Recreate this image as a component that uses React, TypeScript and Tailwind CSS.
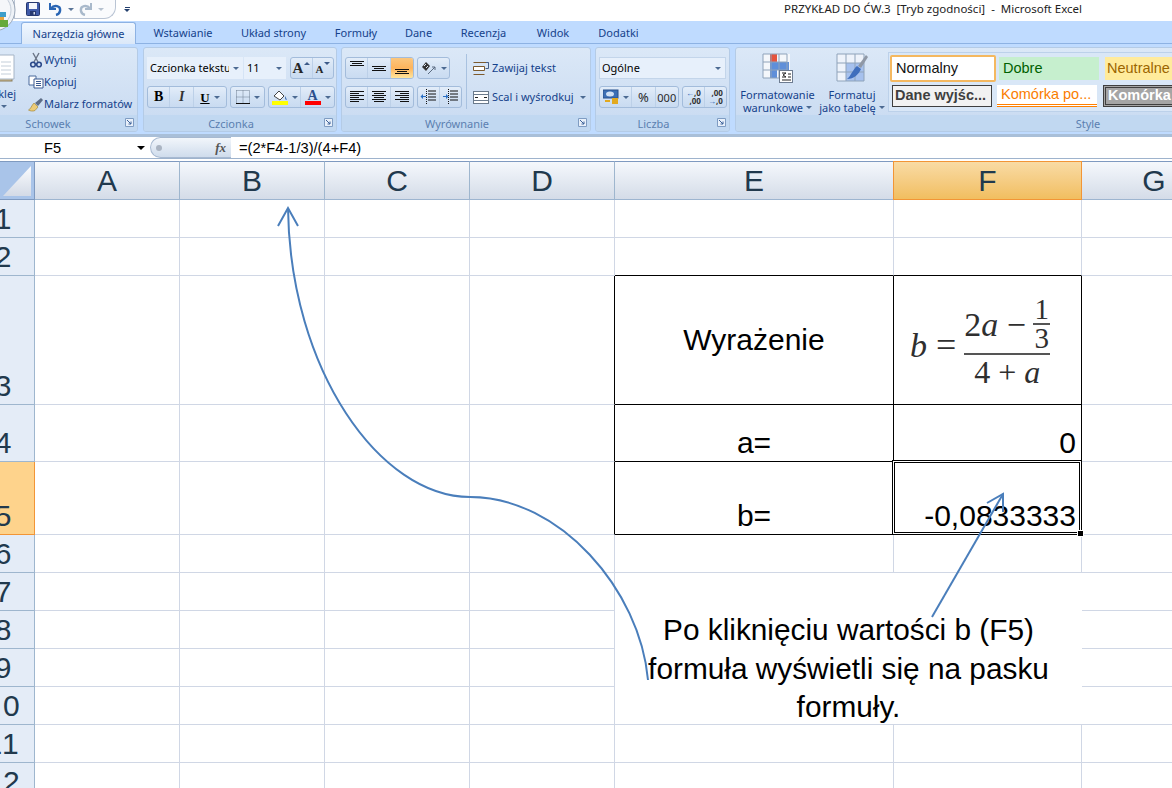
import React from "react";

const Caret = ({ c = "border-t-[#4c6a92]" }: { c?: string }) => (
  <span className={`inline-block w-0 h-0 border-x-[3px] border-t-[3px] border-x-transparent ${c}`} />
);

const Launcher = () => (
  <svg width="9" height="9" viewBox="0 0 9 9" className="shrink-0">
    <path d="M.5 .5h8v8h-8z" fill="#e8f0fa" stroke="#7f9cc2" />
    <path d="M2 2l4 4M6 3.500V6H3.500" fill="none" stroke="#3d6299" />
  </svg>
);

const Group = ({ w, label, ml, pad = "pr-[18px]", children }: { w: string; label: string; ml: string; pad?: string; children?: React.ReactNode }) => (
  <div className={`${w} ${ml} shrink-0 flex flex-col h-[85px] rounded-[3px] border border-[#b4cbe6] bg-gradient-to-b from-[#dbe8f7] to-[#c8daf1] overflow-hidden relative`}>
    <div className="flex-1 min-h-0 relative">{children}</div>
    <div className={`h-[16px] shrink-0 bg-[#c1d8f1] flex items-center justify-center text-[11px] leading-none text-[#5b7fb0] relative ${pad}`}>
      <span>{label}</span>
      {label !== "Style" && (
        <span className="absolute right-[3px] top-[3px]">
          <Launcher />
        </span>
      )}
    </div>
  </div>
);

const Btns = ({ w, children }: { w: string; children: React.ReactNode }) => (
  <div className={`${w} h-[22px] shrink-0 flex rounded-[3px] border border-[#a3bcdb] bg-gradient-to-b from-[#e3edf9] via-[#d3e2f4] to-[#c9dbf1] overflow-hidden divide-x divide-[#bcd0e8]`}>
    {children}
  </div>
);

const Seg = ({ w, on, children }: { w: string; on?: boolean; children: React.ReactNode }) => (
  <div className={`${w} h-full flex items-center justify-center gap-[4px] ${on ? "bg-gradient-to-b from-[#fbc77e] via-[#fdb45c] to-[#ffe59b]" : ""}`}>{children}</div>
);

const Lines = ({ rows }: { rows: [number, number, number][] }) => (
  <svg width="16" height="16" viewBox="0 0 16 16">
    {rows.map(([x, y, w], i) => (
      <rect key={i} x={x} y={y} width={w} height="1" fill="#111" />
    ))}
  </svg>
);

const Indent = ({ flip }: { flip?: boolean }) => (
  <svg width="18" height="18" viewBox="0 0 18 18">
    <path d="M8 3h8M8 6h8M8 9h8M8 12h8" stroke="#111" />
    <path d="M6.500 1v16" stroke="#111" strokeDasharray="1 1" />
    {flip ? <path d="M1 8h3V6l2.500 2.500L4 11V9H1z" fill="#2a6fc4" /> : <path d="M6 8H3V6L.5 8.500 3 11V9h3z" fill="#2a6fc4" />}
  </svg>
);

const SheetGrid = ({ x, y, size }: { x: number; y: number; size: number }) => (
  <g>
    {[0, 1, 2, 3].map((i) => (
      <path key={`h${i}`} d={`M${x} ${y + i * size}h${size * 3}`} stroke="#8fa3ba" fill="none" />
    ))}
    {[0, 1, 2, 3].map((i) => (
      <path key={`v${i}`} d={`M${x + i * size} ${y}v${size * 3}`} stroke="#8fa3ba" fill="none" />
    ))}
  </g>
);

const colWidths = ["A", "B", "C", "D", "E", "F", "G"];
const rowLabels = ["1", "2", "3", "4", "5", "6", "7", "8", "9", "10", "11", "12"];

const tableText: Record<string, { t: string; right?: boolean; mid?: boolean }> = {
  "E3": { t: "Wyrażenie", mid: true },
  "E4": { t: "a=" },
  "E5": { t: "b=" },
  "F4": { t: "0", right: true },
  "F5": { t: "-0,0833333", right: true },
};

const Formula = () => (
  <div className="w-full h-full flex items-center pl-[16px] text-[#2f2f2f] text-[34px] leading-none" style={{ fontFamily: '"Liberation Serif", serif' }}>
    <span className="italic mt-[12px]">b</span>
    <span className="ml-[9px] mt-[9px] text-[36px]">=</span>
    <div className="ml-[8px] flex flex-col items-center w-[86px] shrink-0">
      <div className="w-full flex items-end border-b-2 border-[#555] h-[62px]">
        <span className="mb-[11px] whitespace-pre">2<i>a</i> −</span>
        <div className="ml-auto flex flex-col items-center w-[17px] text-[29px] leading-[27px] mb-[1px]">
          <span className="border-b-2 border-[#555] w-full text-center">1</span>
          <span>3</span>
        </div>
      </div>
      <div className="mt-[1px] whitespace-pre text-[32px]">4 + <i>a</i></div>
    </div>
  </div>
);

const Sheet = () => (
  <div
    className="grid grid-cols-[35px_145px_145px_145px_145px_279px_188px_145px] grid-rows-[39px_38px_38px_129px_57px_73px_38px_38px_38px_38px_38px_38px_38px] text-[30px] text-black"
    style={{ fontFamily: '"Liberation Sans", sans-serif' }}
  >
    <div className="bg-[#a9c4e9] border-t border-[#7f9ac0] border-r border-b flex items-end justify-end p-[3px]">
      <div className="w-[29px] h-[30px] bg-gradient-to-b from-[#fbfcfe] to-[#d3dae6] [clip-path:polygon(100%_0,100%_100%,0_100%)]" />
    </div>
    {colWidths.map((c) => (
      <div
        key={c}
        className={`flex items-center justify-center border-t border-b border-r text-[#21394d] ${
          c === "F"
            ? "bg-gradient-to-b from-[#f9dba4] to-[#f1be5f] border-[#f29536] border-l-[1px] -ml-px"
            : "bg-gradient-to-b from-[#f5f8fc] to-[#d4dce8] border-b-[#9db5d0] border-r-[#9eb6ce] border-t-[#7f9ac0]"
        }`}
      >
        {c}
      </div>
    ))}
    {rowLabels.map((r) => (
      <React.Fragment key={r}>
        <div
          className={`overflow-hidden flex items-end border-r border-b leading-[36px] text-[#21394d] ${
            r === "5" ? "bg-[#fed38c] border-[#f29536]" : "bg-[#e4ecf7] border-r-[#9eb6ce] border-b-[#9eb6ce]"
          }`}
        >
          <span className={`w-[62px] -ml-[28px] shrink-0 text-center ${r.length > 1 ? "tracking-[2px]" : ""}`}>{r}</span>
        </div>
        {colWidths.map((c) => {
          const id = `${c}${r}`;
          const n = Number(r);
          const inTable = (c === "E" || c === "F") && n >= 3 && n <= 5;
          const blackRight = inTable || (c === "D" && n >= 3 && n <= 5);
          const blackBottom = inTable || ((c === "E" || c === "F") && n === 2);
          const cell = tableText[id];
          return (
            <div
              key={id}
              className={`relative flex border-r border-b leading-[36px] ${blackRight ? "border-r-black" : "border-r-[#d0d7e5]"} ${
                blackBottom ? "border-b-black" : "border-b-[#d0d7e5]"
              } ${cell?.right ? "justify-end pr-[5px]" : "justify-center"} ${cell?.mid ? "items-center" : "items-end"}`}
            >
              {cell && <span>{cell.t}</span>}
              {id === "F3" && <Formula />}
              {id === "F5" && (
                <div className="absolute z-10 -left-[2px] -top-[2px] -right-px -bottom-px border border-black">
                  <div className="w-full h-full border border-white">
                    <div className="w-full h-full border border-black" />
                  </div>
                  <div className="absolute -right-[3px] -bottom-[3px] w-[5px] h-[5px] bg-black border border-white box-content" />
                </div>
              )}
            </div>
          );
        })}
      </React.Fragment>
    ))}
  </div>
);

export default function App() {
  return (
    <div className="relative w-[1172px] h-[788px] overflow-hidden bg-white" style={{ fontFamily: '"Noto Sans", sans-serif' }}>
      {/* title bar */}
      <div className="h-[21px] flex items-center text-[12px]">
        <div className="ml-[14px] w-[102px] h-[19px] -mt-[2px] flex items-center border border-t-0 border-[#b9c4d4] rounded-br-[12px] bg-[#fafbfd]">
          <svg width="14" height="14" viewBox="0 0 14 14" className="ml-[11px]">
            <rect x=".5" y=".5" width="13" height="13" rx="1" fill="#3f5aa8" stroke="#26386f" />
            <rect x="3" y="1" width="8" height="6" fill="#f4f6fb" />
            <rect x="4" y="9" width="6" height="4" fill="#26386f" />
            <rect x="7.500" y="10" width="1.500" height="2.500" fill="#cfd8ea" />
          </svg>
          <svg width="14" height="14" viewBox="0 0 14 14" className="ml-[8px]">
            <path d="M2 1v6h6" fill="none" stroke="#2b66b5" strokeWidth="2" />
            <path d="M3 6.500C6 2.500 13 3.500 12 9c-.4 2-2 3.500-4 4" fill="none" stroke="#2b66b5" strokeWidth="2.400" />
          </svg>
          <span className="ml-[6px] flex"><Caret c="border-t-[#5a7598]" /></span>
          <svg width="14" height="14" viewBox="0 0 14 14" className="ml-[5px]">
            <path d="M12 1v6H6" fill="none" stroke="#a9b9cb" strokeWidth="2" />
            <path d="M11 6.500C8 2.500 1 3.500 2 9c.4 2 2 3.500 4 4" fill="none" stroke="#a9b9cb" strokeWidth="2.400" />
          </svg>
          <span className="ml-[5px] flex"><Caret c="border-t-[#b6c2d0]" /></span>
        </div>
        <div className="ml-[8px] flex flex-col items-center gap-[1px] -mt-[3px]">
          <span className="w-[5px] h-[1px] bg-[#24406e]" />
          <Caret c="border-t-[#24406e]" />
        </div>
        <span className="ml-auto pr-[90px] -mt-[3px] whitespace-pre text-[11.500px] text-[#222]">PRZYKŁAD DO ĆW.3  [Tryb zgodności]  -  Microsoft Excel</span>
      </div>

      {/* tabs */}
      <div className="h-[23px] bg-[#bfdbff] flex items-end text-[11px] text-[#15428b] border-b border-[#8db2e3]">
        <div className="ml-[21px] w-[115px] h-[22px] -mb-px pt-[2px] flex items-center justify-center rounded-t-[3px] border border-b-0 border-[#8db2e3] bg-gradient-to-b from-[#f0f7ff] to-[#dbe8f8]">Narzędzia główne</div>
        {[
          ["Wstawianie", "ml-[17px] w-[60px]"],
          ["Układ strony", "ml-[28px] w-[65px]"],
          ["Formuły", "ml-[29px] w-[42px]"],
          ["Dane", "ml-[28px] w-[27px]"],
          ["Recenzja", "ml-[29px] w-[45px]"],
          ["Widok", "ml-[30px] w-[34px]"],
          ["Dodatki", "ml-[28px] w-[41px]"],
        ].map(([t, c]) => (
          <div key={t} className={`${c} h-[22px] pt-[3px] flex items-center justify-center whitespace-nowrap`}>{t}</div>
        ))}
      </div>

      {/* ribbon */}
      <div className="h-[93px] bg-[#bfdbff] flex pt-[3px] text-[11px] text-[#15428b] border-b-[3px] border-[#a9bfd8]">
        <Group w="w-[180px]" ml="-ml-[42px]" label="Schowek" pad="">
          <div className="absolute left-[17px] top-[6px] flex flex-col items-center w-[40px]">
            <svg width="30" height="28" viewBox="0 0 30 28" className="self-end mr-[1px]">
              <rect x="1" y="3" width="26" height="24" fill="#cbb98f" stroke="#8a7c5a" />
              <path d="M13 1h16v24H13z" fill="#fff" stroke="#a5b4c6" />
              <path d="M16 8h10M16 12h10M16 16h10M16 20h10" stroke="#c3ced9" />
            </svg>
            <span className="self-end leading-none mt-[6px]">Wklej</span>
            <span className="self-center flex mt-[6px] mr-[-15px]"><Caret /></span>
          </div>
          <div className="absolute left-[68px] top-[1px] flex flex-col">
            {[
              ["Wytnij", (
                <svg key="a" width="14" height="16" viewBox="0 0 14 16">
                  <path d="M4 1l5 9M10 1L5 10" stroke="#6a7486" strokeWidth="1.400" fill="none" />
                  <circle cx="4" cy="12.500" r="2.300" fill="none" stroke="#2c4a8a" strokeWidth="1.600" />
                  <circle cx="10" cy="12.500" r="2.300" fill="none" stroke="#2c4a8a" strokeWidth="1.600" />
                </svg>
              )],
              ["Kopiuj", (
                <svg key="b" width="16" height="14" viewBox="0 0 16 14">
                  <path d="M1 1h7v9H1z" fill="#fff" stroke="#4a6a9c" />
                  <path d="M6 4h9v9H6z" fill="#fff" stroke="#3a5a90" />
                  <path d="M8 6.500h5M8 8.500h5M8 10.500h5" stroke="#3a5a90" />
                </svg>
              )],
              ["Malarz formatów", (
                <svg key="c" width="16" height="15" viewBox="0 0 16 15">
                  <path d="M6 6l4 4-3 3.500C5 14.500 2 14 .5 13 2.500 12.500 3.500 8.500 6 6z" fill="#eccb77" stroke="#a58b3c" strokeWidth=".7" />
                  <path d="M7 6l6-5 2 2-5 6z" fill="#5d6d86" />
                </svg>
              )],
            ].map(([t, ic]) => (
              <div key={t as string} className="h-[22px] flex items-center">
                <span className="w-[17px] flex justify-center">{ic as React.ReactNode}</span>
                <span className="whitespace-nowrap">{t as string}</span>
              </div>
            ))}
          </div>
        </Group>

        <Group w="w-[194px]" ml="ml-[5px]" label="Czcionka">
          <div className="pl-[3px] pt-[9px] flex flex-col gap-[7px] text-black">
            <div className="flex">
              <div className="w-[96px] h-[22px] bg-[#e7f0fb] flex items-center pl-[3px] pr-[3px] gap-[4px] text-[11px]">
                <span className="w-[79px] overflow-hidden whitespace-nowrap">Czcionka tekstu</span>
                <Caret />
              </div>
              <div className="ml-px w-[42px] h-[22px] bg-[#e7f0fb] flex items-center pl-[3px] text-[11px]">
                <span>11</span>
                <span className="ml-auto mr-[4px] flex"><Caret /></span>
              </div>
              <div className="ml-[4px]">
                <Btns w="w-[44px]">
                  <Seg w="w-[23px]"><span className="text-[15px] font-bold leading-none text-[#262626]" style={{ fontFamily: '"Liberation Serif", serif' }}>A</span><span className="-ml-[3px] -mt-[9px] rotate-180 flex"><Caret c="border-t-[#3c5a88]" /></span></Seg>
                  <Seg w="w-[21px]"><span className="text-[11px] font-bold leading-none text-[#262626] mt-[3px]" style={{ fontFamily: '"Liberation Serif", serif' }}>A</span><span className="-ml-[3px] -mt-[9px] flex"><Caret c="border-t-[#3c5a88]" /></span></Seg>
                </Btns>
              </div>
            </div>
            <div className="flex">
              <Btns w="w-[80px]">
                <Seg w="w-[23px]"><b className="text-[14px] leading-none" style={{ fontFamily: '"Liberation Serif", serif' }}>B</b></Seg>
                <Seg w="w-[24px]"><i className="text-[14px] leading-none text-[#333] font-bold" style={{ fontFamily: '"Liberation Serif", serif' }}>I</i></Seg>
                <Seg w="w-[33px]"><span className="text-[13px] underline font-bold leading-none" style={{ fontFamily: '"Liberation Serif", serif' }}>U</span><Caret /></Seg>
              </Btns>
              <div className="ml-[3px]">
                <Btns w="w-[35px]">
                  <Seg w="w-full">
                    <svg width="14" height="14" viewBox="0 0 14 14">
                      <path d="M.5 .5h13v13M.5 .5v13M7 .5v13M.5 7h13" stroke="#6d7c91" strokeDasharray="1 1" fill="none" />
                      <path d="M0 13.500h14" stroke="#111" />
                    </svg>
                    <Caret />
                  </Seg>
                </Btns>
              </div>
              <div className="ml-[3px]">
                <Btns w="w-[67px]">
                  <Seg w="w-[33px]">
                    <span className="flex flex-col items-center">
                      <svg width="16" height="11" viewBox="0 0 16 11">
                        <path d="M2 6l5-5 5 5-4 4z" fill="#fff" stroke="#444" />
                        <path d="M13 6c1 2 2 3 1.500 4-.8 0-1.500-.5-1.500-4z" fill="#2a5fa8" />
                      </svg>
                      <span className="w-[16px] h-[4px] bg-[#ffff00]" />
                    </span>
                    <Caret />
                  </Seg>
                  <Seg w="w-[34px]">
                    <span className="flex flex-col items-center">
                      <span className="text-[14px] leading-[11px] font-bold text-[#2c4f8c]" style={{ fontFamily: '"Liberation Serif", serif' }}>A</span>
                      <span className="w-[16px] h-[4px] bg-[#ff0000]" />
                    </span>
                    <Caret />
                  </Seg>
                </Btns>
              </div>
            </div>
          </div>
        </Group>

        <Group w="w-[250px]" ml="ml-[4px]" label="Wyrównanie">
          <div className="pl-[3px] pt-[9px] flex">
            <div className="flex flex-col gap-[7px]">
              <div className="flex gap-[3px]">
                <Btns w="w-[69px]">
                  <Seg w="w-[23px]"><Lines rows={[[1, 1, 14], [3, 3, 10], [1, 5, 14]]} /></Seg>
                  <Seg w="w-[23px]"><Lines rows={[[1, 6, 14], [3, 8, 10], [1, 10, 14]]} /></Seg>
                  <Seg w="w-[23px]" on><Lines rows={[[1, 9, 14], [3, 11, 10], [1, 13, 14]]} /></Seg>
                </Btns>
                <Btns w="w-[33px]">
                  <Seg w="w-full">
                    <svg width="16" height="15" viewBox="0 0 16 15">
                      <path d="M1 6l4-5 4 4-4 5z" fill="#333" />
                      <path d="M3 5l2-2M5 7l2-2" stroke="#dfe8f5" />
                      <path d="M7 13l7-7M14 6h-3M14 6v3" stroke="#5b6b80" fill="none" />
                    </svg>
                    <Caret />
                  </Seg>
                </Btns>
              </div>
              <div className="flex gap-[3px]">
                <Btns w="w-[69px]">
                  <Seg w="w-[23px]"><Lines rows={[[1, 2, 14], [1, 4, 9], [1, 6, 14], [1, 8, 9], [1, 10, 14], [1, 12, 9]]} /></Seg>
                  <Seg w="w-[23px]"><Lines rows={[[1, 2, 14], [3, 4, 10], [1, 6, 14], [3, 8, 10], [1, 10, 14], [3, 12, 10]]} /></Seg>
                  <Seg w="w-[23px]"><Lines rows={[[1, 2, 14], [6, 4, 9], [1, 6, 14], [6, 8, 9], [1, 10, 14], [6, 12, 9]]} /></Seg>
                </Btns>
                <Btns w="w-[45px]">
                  <Seg w="w-[23px]"><Indent /></Seg>
                  <Seg w="w-[22px]"><Indent flip /></Seg>
                </Btns>
              </div>
            </div>
            <div className="ml-[4px] -mt-[3px] w-px h-[55px] bg-[#a9c2e0]" />
            <div className="ml-[6px] flex flex-col gap-[7px]">
              <div className="h-[22px] flex items-center whitespace-nowrap">
                <svg width="16" height="15" viewBox="0 0 16 15">
                  <path d="M.5 1.500h15M.5 5.500h11v4h-11zM.5 13.500h11" stroke="#7d5b2e" fill="#fff" />
                  <path d="M13 1.500h2.500v6h-3" stroke="#46608a" fill="none" />
                </svg>
                <span className="ml-[3px]">Zawijaj tekst</span>
              </div>
              <div className="h-[22px] flex items-center whitespace-nowrap">
                <svg width="16" height="15" viewBox="0 0 16 15">
                  <rect x=".5" y="1.500" width="15" height="12" fill="#fff" stroke="#6a7a8c" />
                  <path d="M0 4.500h16M0 10.500h16" stroke="#6a7a8c" />
                  <path d="M2 7.500h3M11 7.500h3" stroke="#222" />
                </svg>
                <span className="ml-[3px]">Scal i wyśrodkuj</span>
                <span className="ml-[6px] flex"><Caret /></span>
              </div>
            </div>
          </div>
        </Group>

        <Group w="w-[135px]" ml="ml-[4px]" label="Liczba">
          <div className="pl-[3px] pt-[9px] flex flex-col gap-[7px] text-black">
            <div className="w-[127px] h-[22px] bg-[#e7f0fb] border border-[#c3d5ea] flex items-center px-[2px] text-[11px]">
              <span>Ogólne</span>
              <span className="ml-auto mr-[2px] flex"><Caret /></span>
            </div>
            <div className="flex gap-[3px]">
              <Btns w="w-[80px]">
                <Seg w="w-[33px]">
                  <svg width="16" height="16" viewBox="0 0 16 16">
                    <rect x="0" y="1" width="15" height="8" fill="#3c6fb5" stroke="#28508c" />
                    <ellipse cx="7" cy="5" rx="4" ry="2.500" fill="#cfe0f5" />
                    <path d="M9 10h6M9 12h6M9 14h6" stroke="#e2a91f" strokeWidth="2" />
                    <path d="M2 12h5" stroke="#e2a91f" strokeWidth="2" />
                  </svg>
                  <Caret />
                </Seg>
                <Seg w="w-[24px]"><span className="text-[13px] leading-none text-[#2a2a2a]">%</span></Seg>
                <Seg w="w-[23px]"><span className="text-[11px] leading-none text-[#2a2a2a]">000</span></Seg>
              </Btns>
              <Btns w="w-[45px]">
                <Seg w="w-[23px]">
                  <span className="flex flex-col text-[8px] leading-[8px] font-bold text-[#333] items-end">
                    <span><span className="text-[#2a62b0]">←</span>,0</span>
                    <span>,00</span>
                  </span>
                </Seg>
                <Seg w="w-[22px]">
                  <span className="flex flex-col text-[8px] leading-[8px] font-bold text-[#333] items-end">
                    <span>,00</span>
                    <span><span className="text-[#2a62b0]">→</span>,0</span>
                  </span>
                </Seg>
              </Btns>
            </div>
          </div>
        </Group>

        <Group w="w-[724px]" ml="ml-[5px]" label="Style">
          <div className="flex h-full">
            <div className="w-[83px] flex flex-col items-center pt-[5px] shrink-0">
              <svg width="31" height="30" viewBox="0 0 31 30">
                <rect x="1" y="1" width="27" height="24" fill="#f4f7fb" />
                <rect x="8" y="1" width="7" height="8" fill="#e5543e" />
                <rect x="8" y="9" width="19" height="8" fill="#5f8fd9" />
                <rect x="8" y="17" width="7" height="8" fill="#5f8fd9" />
                <SheetGrid x={1} y={1} size={8} />
                <rect x="17.500" y="17.500" width="13" height="12" fill="#fff" stroke="#6d7c91" />
                <path d="M20 20h4l-3 2 3 2h-4M26 21h3M26 24h3M20 27h9" stroke="#222" fill="none" />
              </svg>
              <span className="leading-[13px] mt-[5px] whitespace-nowrap">Formatowanie</span>
              <span className="leading-[13px] whitespace-nowrap flex items-center gap-[3px]">warunkowe <Caret /></span>
            </div>
            <div className="w-[66px] flex flex-col items-center pt-[5px] shrink-0">
              <svg width="32" height="30" viewBox="0 0 32 30">
                <rect x="1" y="1" width="27" height="27" fill="#eef3fb" />
                <rect x="10" y="10" width="18" height="18" fill="#a6c1ee" />
                <SheetGrid x={1} y={1} size={9} />
                <path d="M22 13L30 2l2 2-7 11z" fill="#8f98a6" />
                <path d="M21 13l4 3c-2 5-7 10-14 10 4-3 6-10 10-13z" fill="#3f6ebd" />
              </svg>
              <span className="leading-[13px] mt-[5px] whitespace-nowrap">Formatuj</span>
              <span className="leading-[13px] whitespace-nowrap flex items-center gap-[3px]">jako tabelę <Caret /></span>
            </div>
            <div className="ml-[3px] mt-[4px] h-[60px] flex-1 bg-[#d9e7f7] border border-[#bcd1ea] pl-[1px] pt-[2px] flex flex-col gap-[3px]" style={{ fontFamily: '"Liberation Sans", sans-serif' }}>
              <div className="flex items-center gap-[3px] text-[14.500px]">
                <div className="w-[106px] h-[27px] shrink-0 bg-white border-2 border-[#f4b860] rounded-[2px] flex items-center pl-[4px] text-[#111]">Normalny</div>
                <div className="w-[100px] h-[23px] shrink-0 bg-[#c6efce] text-[#006100] flex items-center pl-[4px]">Dobre</div>
                <div className="ml-[3px] w-[100px] h-[23px] shrink-0 bg-[#ffeb9c] text-[#9c6500] flex items-center pl-[2px]">Neutralne</div>
              </div>
              <div className="flex items-center gap-[3px] text-[14.500px]">
                <div className="ml-[2px] mr-[2px] w-[100px] h-[22px] shrink-0 bg-[#f2f2f2] border border-[#3f3f3f] text-[#3f3f3f] font-bold flex items-center pl-[2px] whitespace-nowrap">Dane wyjśc...</div>
                <div className="w-[100px] h-[22px] shrink-0 bg-white border-b-[3px] border-double border-[#ff8001] text-[#fa7d00] flex items-center pl-[4px] whitespace-nowrap">Komórka po...</div>
                <div className="ml-[3px] w-[100px] h-[22px] shrink-0 bg-[#a5a5a5] border-[3px] border-double border-[#3f3f3f] text-white font-bold flex items-center pl-[2px] whitespace-nowrap">Komórka</div>
              </div>
            </div>
          </div>
        </Group>
      </div>

      {/* formula bar */}
      <div className="h-[22px] flex items-center border-b border-[#9eb3cd] text-[14.670px] text-black" style={{ fontFamily: '"Liberation Sans", sans-serif' }}>
        <span className="ml-[44px] w-[92px]">F5</span>
        <span className="ml-px w-0 h-0 border-x-[4px] border-t-[4px] border-x-transparent border-t-black" />
        <div className="ml-[5px] w-[81px] h-[21px] rounded-l-full border border-r-0 border-[#a7b9d1] bg-gradient-to-b from-[#f2f6fb] to-[#cfdcec] flex items-center shrink-0">
          <span className="ml-[5px] w-[6px] h-[6px] rounded-full bg-[#aab4c2]" />
          <span className="ml-auto mr-[5px] italic font-bold text-[13px] text-[#555]" style={{ fontFamily: '"Liberation Serif", serif' }}>fx</span>
        </div>
        <span className="ml-[8px]">=(2*F4-1/3)/(4+F4)</span>
      </div>
      <div className="h-[2px] bg-white" />

      <Sheet />

      {/* office button */}
      <svg width="16" height="36" viewBox="0 0 16 36" className="absolute left-0 top-0">
        <circle cx="-6" cy="10" r="21" fill="#eef2f7" stroke="#9aa7b8" />
        <circle cx="-6" cy="10" r="17" fill="#f5f7fa" stroke="#c2ccd8" />
        <rect x="0" y="12" width="6" height="5" fill="#3d9ec9" />
        <rect x="0" y="20" width="8" height="7" fill="#66a93b" />
        <rect x="0" y="17" width="4" height="3" fill="#e8a33a" />
      </svg>

      {/* callout */}
      <div
        className="absolute left-[615px] top-[573px] w-[467px] h-[151px] bg-white pt-[38px] text-center text-[29.800px] leading-[38.500px] text-black"
        style={{ fontFamily: '"Liberation Sans", sans-serif' }}
      >
        Po kliknięciu wartości b (F5)
        <br />
        formuła wyświetli się na pasku
        <br />
        formuły.
      </div>

      {/* arrows */}
      <svg width="1172" height="788" viewBox="0 0 1172 788" className="absolute left-0 top-0 pointer-events-none z-20" fill="none" stroke="#4a7ebb" strokeWidth="2">
        <path d="M648 680C640 590 560 497 470 497 380 497 290 370 288 208" />
        <path d="M278 226L288 208 298 226" />
        <path d="M932 617L1003 494" />
        <path d="M987 503L1003 494 1003 512" />
      </svg>
    </div>
  );
}
